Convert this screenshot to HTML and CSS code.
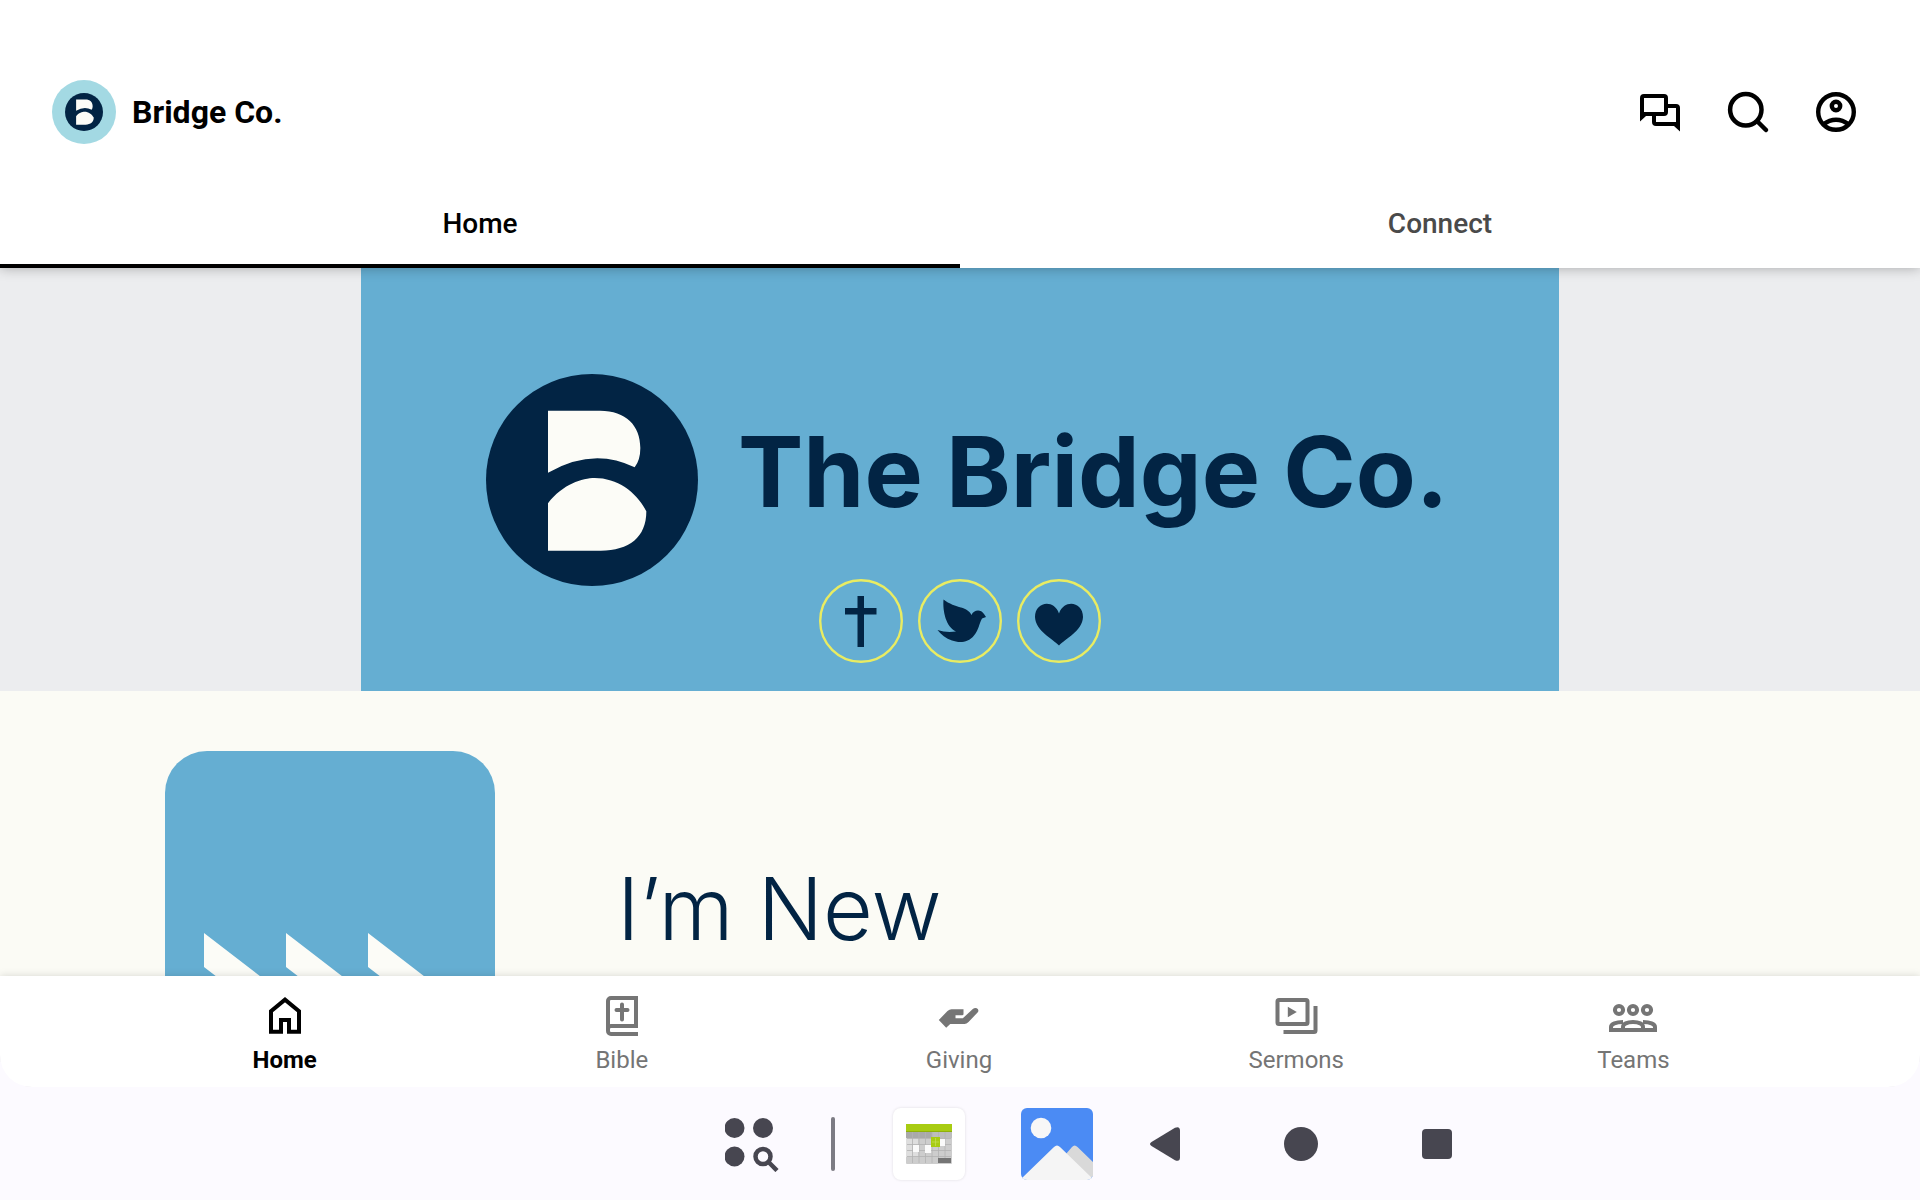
FILE: index.html
```html
<!DOCTYPE html>
<html lang="en">
<head>
    <meta charset="UTF-8">
    <meta name="viewport" content="width=device-width, initial-scale=1.0">
    <title>Bridge Co.</title>
    <link rel="stylesheet" href="styles.css">
</head>
<body>
    <div class="app">
        <header class="app-header">
            <div class="top-bar">
                <svg class="avatar" viewBox="0 0 64 64" aria-hidden="true">
                    <circle cx="32" cy="32" r="32" fill="#a3d9e3"/>
                    <svg x="13" y="13" width="38" height="38" viewBox="0 0 636 636">
                        <circle cx="318" cy="318" r="318" fill="#022444"/>
                        <path fill="#fcfcf7" d="M186 110H342C420 110 463 155 463 222Q463 258 446 280Q322 218 186 296ZM186 388C230 330 290 312 326 312C395 312 452 355 481 412C481 490 430 530 344 530H186Z"/>
                    </svg>
                </svg>
                <h1>Bridge Co.</h1>
                <div class="actions">
                    <button aria-label="Messages">
                        <svg viewBox="0 0 48 48" fill="none" stroke="currentColor" stroke-width="4">
                            <path d="M6 28V10a2 2 0 0 1 2-2h20a2 2 0 0 1 2 2v14a2 2 0 0 1-2 2H8"/>
                            <path d="M18 27v7a2 2 0 0 0 2 2h20M42 38V20a2 2 0 0 0-2-2h-9"/>
                            <path fill="currentColor" stroke="none" d="M4 25v8.5l6-5.5zM44 34v9.5L38 38z"/>
                        </svg>
                    </button>
                    <button aria-label="Search">
                        <svg viewBox="0 0 48 48" fill="none" stroke="currentColor" stroke-width="4.5" stroke-linecap="round">
                            <circle cx="21.8" cy="21.8" r="15.7"/>
                            <path d="M33.5 33.5l8.5 8.5"/>
                        </svg>
                    </button>
                    <button aria-label="Profile">
                        <svg viewBox="0 0 48 48" fill="none" stroke="currentColor" stroke-width="4.4">
                            <circle cx="24" cy="24" r="17.8"/>
                            <circle cx="24" cy="18" r="4.2"/>
                            <path d="M11 36.5q13-9.5 26 0"/>
                        </svg>
                    </button>
                </div>
            </div>
            <nav class="tabs">
                <a href="#home" class="tab active">Home</a>
                <a href="#connect" class="tab">Connect</a>
            </nav>
        </header>

        <main>
            <section class="hero">
                <div class="banner">
                    <div class="brand">
                        <svg class="logo" viewBox="0 0 636 636" aria-hidden="true">
                            <circle cx="318" cy="318" r="318" fill="#022444"/>
                            <path fill="#fcfcf7" d="M186 110H342C420 110 463 155 463 222Q463 258 446 280Q322 218 186 296ZM186 388C230 330 290 312 326 312C395 312 452 355 481 412C481 490 430 530 344 530H186Z"/>
                        </svg>
                        <h2>The Bridge Co.</h2>
                    </div>
                    <div class="badges">
                        <svg viewBox="0 0 84 84">
                            <circle cx="42" cy="42" r="40.8"/>
                            <path d="M38.5 17h6.5v12h12.5v6.5H45V68h-6.5V35.5H26V29h12.5z"/>
                        </svg>
                        <svg viewBox="0 0 84 84">
                            <circle cx="42" cy="42" r="40.8"/>
                            <path d="M25.5 20.5C31 25 38 27 43 28.5c5 1.5 9 4 10.5 7.5 2-5 9-6.5 12.5-1l2 3-4 1.5c-3 5-3 11-8 17C50 64 41 64 34 61.5c-6-2-11-6-14.5-10.5 6 2 12 2.5 18.5 1.5C28 48 24.5 32 25.5 20.5z"/>
                        </svg>
                        <svg viewBox="0 0 84 84">
                            <circle cx="42" cy="42" r="40.8"/>
                            <path d="M42 66.5C36 60 18.5 52 18 38c0-15 18.5-18.5 24-3.5 5.5-15 24-11.5 24 3.5C65.5 52 48 60 42 66.5z"/>
                        </svg>
                    </div>
                </div>
            </section>

            <section class="link-row">
                <a href="#new">
                    <!-- chevron tile -->
                    <svg class="tile" viewBox="0 0 330 316" aria-hidden="true">
                        <rect width="330" height="316" rx="42" fill="#65aed2"/>
                        <path fill="#fcfcf7" d="M39 182l100 77-100 77v-34l56-43-56-43zM121 182l100 77-100 77v-34l56-43-56-43zM203 182l100 77-100 77v-34l56-43-56-43z"/>
                    </svg>
                    <span>I’m New</span>
                </a>
            </section>
        </main>

        <nav class="bottom-nav">
            <a href="#home" class="current">
                <svg viewBox="0 0 48 48" fill="none" stroke="currentColor" stroke-width="4">
                    <path d="M10 39.7V19.3L24 7.6l14 11.7v20.4H28V28h-8v11.7z"/>
                </svg>
                Home
            </a>
            <a href="#bible">
                <svg viewBox="0 0 48 48" fill="none" stroke="currentColor" stroke-width="4">
                    <path d="M38 34V6H13a3 3 0 0 0-3 3v30a3 3 0 0 0 3 3h27M40 34H13a3 3 0 0 0-3 3"/>
                    <path stroke-linecap="round" d="M24 12.5v15M18.5 18h11"/>
                </svg>
                Bible
            </a>
            <a href="#giving">
                <svg viewBox="0 0 48 48" fill="currentColor">
                    <path d="M3.8 28l8.7-9q2-1.7 4-1.7h12V22q0 1.3-1.3 1.3h-6.7v3h7.3l10-9.3q2-1.6 4-.7 2.6 1.7 1 4L33.5 30q-2 2-4 2H15.2l-4 3.7z"/>
                </svg>
                Giving
            </a>
            <a href="#sermons">
                <svg viewBox="0 0 48 48" fill="none" stroke="currentColor" stroke-width="4">
                    <rect x="5.5" y="8" width="30" height="24" rx="1.5"/>
                    <path d="M11.5 40H42a1.5 1.5 0 0 0 1.5-1.5V14"/>
                    <path fill="currentColor" stroke="none" d="M15.8 14.7l9 5.3-9 5.3z"/>
                </svg>
                Sermons
            </a>
            <a href="#teams">
                <svg viewBox="0 0 48 48" fill="none" stroke="currentColor" stroke-width="4">
                    <circle cx="10" cy="18" r="4.1"/>
                    <circle cx="24" cy="18" r="4.1"/>
                    <circle cx="38" cy="18" r="4.1"/>
                    <path d="M14 38H2v-3c0-3 5-5 12-5M34 38h12v-3c0-3-5-5-12-5"/>
                    <path d="M14 38v-3c0-3 4-5 10-5s10 2 10 5v3z"/>
                </svg>
                Teams
            </a>
        </nav>
    </div>

    <footer class="system-bar">
        <div class="apps">
            <button aria-label="All apps">
                <svg width="56" height="56" viewBox="0 0 56 56" fill="#474650">
                    <circle cx="9.5" cy="12" r="10"/>
                    <circle cx="38" cy="12" r="10"/>
                    <circle cx="9.5" cy="40.5" r="10"/>
                    <circle cx="38" cy="40.5" r="7.5" fill="none" stroke="#474650" stroke-width="4.5"/>
                    <path d="M43 45.500l9 9" stroke="#474650" stroke-width="4.5"/>
                </svg>
            </button>
            <span class="divider"></span>
            <button aria-label="Calendar" class="calendar">
                <svg width="46" height="40" viewBox="0 0 46 40">
                    <rect width="46" height="40" rx="1" fill="#cdcdcd"/>
                    <rect y="8" width="26" height="6" fill="#a9a9a9"/>
                    <rect x="26" y="8" width="20" height="6" fill="#bdbdbd"/>
                    <path d="M0 14h12v19H0zM19 20h7v9h-7z" fill="#dedede"/>
                    <path d="M1 14.5h44M1 20.5h44M1 26.5h44M1 32.5h44M6.5 8v31M13 8v31M19.5 8v31M26 8v31M32.5 8v31M39 8v31" stroke="#b2b2b2" stroke-width=".8"/>
                    <path d="M32 34h13v5H32z" fill="#757575"/>
                    <path d="M7 21h6v7H7zM19 21h6v8h-6zM34 15h5v7h-5z" fill="#fafafa"/>
                    <path d="M25 13h9v10h-9zM0 0h46v8H0z" fill="#a8cc12"/>
                    <path d="M0 7h46v1H0z" fill="#8fb00b"/>
                    <path d="M29.5 14v8M26 18h7" stroke="#c6e05b" stroke-width=".7"/>
                </svg>
            </button>
            <button aria-label="Gallery">
                <svg width="72" height="72" viewBox="0 0 72 72">
                    <path d="M6 0h60a6 6 0 0 1 6 6v60a6 6 0 0 1-6 6H6a6 6 0 0 1-6-6V6a6 6 0 0 1 6-6z" fill="#4b8bf4"/>
                    <circle cx="20" cy="20" r="10.3" fill="#f7f7f7"/>
                    <path d="M45 46l6-7q2.5-3 5.5 0L72 54v14L68 71z" fill="#d9d9d9"/>
                    <path d="M1 70l32-31q3-3 6 0l32 31q-2 2-5 2H6q-3 0-5-2z" fill="#f5f5f5"/>
                </svg>
            </button>
        </div>
        <div class="controls">
            <button aria-label="Back">
                <svg width="30" height="34" viewBox="0 0 30 34" fill="#474650">
                    <path d="M1.5 15L25 .8q5-2 5 3v26.400q0 5-5 3L1.5 19q-3-2 0-4z"/>
                </svg>
            </button>
            <button aria-label="Home screen">
                <svg width="34" height="34" viewBox="0 0 34 34" fill="#474650"><circle cx="17" cy="17" r="17"/></svg>
            </button>
            <button aria-label="Recent apps">
                <svg width="30" height="30" viewBox="0 0 30 30" fill="#474650"><rect width="30" height="30" rx="4"/></svg>
            </button>
        </div>
    </footer>
</body>
</html>
```
FILE: styles.css
```css
* {
    box-sizing: border-box;
}
body {
    margin: 0;
    height: 100vh;
    display: flex;
    flex-direction: column;
    overflow: hidden;
    background-color: #fcfaff;
    color: #000;
    font-family: Roboto, sans-serif;
}
h1, h2 {
    margin: 0;
}
a {
    color: inherit;
    text-decoration: none;
}
button {
    padding: 0;
    border: none;
    background: none;
    color: inherit;
    cursor: pointer;
}
svg {
    display: block;
}
.app {
    flex: 1;
    min-height: 0;
    display: flex;
    flex-direction: column;
    overflow: hidden;
    border-radius: 0 0 32px 32px;
}

/* header */
.app-header {
    position: relative;
    padding-top: 48px;
    background-color: #fff;
    box-shadow: 0 0 12px rgba(0, 0, 0, 0.3);
}
.top-bar {
    display: flex;
    align-items: center;
    height: 128px;
    padding: 0 60px 0 52px;
}
.avatar {
    width: 64px;
    height: 64px;
    margin-right: 16px;
}
h1 {
    font-size: 32px;
    font-weight: 700;
}
.actions {
    display: flex;
    gap: 40px;
    margin-left: auto;
}
.actions svg, .bottom-nav svg {
    width: 48px;
    height: 48px;
}
.tabs {
    display: flex;
}
.tab {
    flex: 1;
    height: 92px;
    line-height: 95px;
    text-align: center;
    font-size: 28px;
    font-weight: 500;
    color: #4a4a4a;
}
.tab.active {
    color: #000;
    box-shadow: inset 0 -4px #000;
}

/* content */
main {
    flex: 1;
    min-height: 0;
    overflow: hidden;
    background-color: #fbfbf5;
}
.hero {
    background-color: #ecedef;
}
.banner {
    width: 62.4%;
    margin: 0 auto;
    padding: 106px 0 28px;
    background-color: #65aed2;
    color: #022444;
    font-family: Inter, sans-serif;
}
.brand {
    display: flex;
    align-items: center;
    gap: 40px;
    padding-left: 125px;
}
.logo {
    flex: none;
    width: 212px;
    height: 212px;
}
h2 {
    padding-bottom: 16px;
    font-size: 98px;
    font-weight: 700;
    line-height: 120px;
    white-space: nowrap;
}
.badges {
    display: flex;
    justify-content: center;
    gap: 15px;
    margin-top: -7px;
}
.badges svg {
    width: 84px;
    height: 84px;
    fill: #022444;
}
.badges circle {
    fill: none;
    stroke: #e9ec62;
    stroke-width: 2.4;
}
.link-row a {
    display: flex;
    align-items: center;
    gap: 122px;
    padding: 60px 165px;
    color: #022444;
    font-family: Inter, sans-serif;
    font-size: 86px;
    font-weight: 300;
}
.tile {
    flex: none;
    width: 330px;
    height: 316px;
}

/* bottom navigation */
.bottom-nav {
    position: relative;
    display: flex;
    padding: 16px 118px 13px 116px;
    background-color: #fff;
    box-shadow: 0 0 8px rgba(0, 0, 0, 0.15);
}
.bottom-nav a {
    flex: 1;
    display: flex;
    flex-direction: column;
    align-items: center;
    gap: 6px;
    color: #757575;
    font-size: 24px;
    line-height: 28px;
}
.bottom-nav .current {
    color: #000;
    font-weight: 700;
}

/* system bar */
.system-bar {
    display: flex;
    justify-content: center;
    gap: 4px;
    height: 113px;
    padding-left: 310px;
}
.apps, .controls {
    display: flex;
    align-items: center;
}
.divider {
    width: 4px;
    height: 54px;
    margin: 0 58px 0 50px;
    border-radius: 2px;
    background-color: #7c7b84;
}
.calendar {
    display: flex;
    align-items: center;
    justify-content: center;
    width: 72px;
    height: 72px;
    margin-right: 56px;
    border-radius: 8px;
    background-color: #fff;
    box-shadow: 0 0 3px rgba(0, 0, 0, 0.12);
}
.controls button {
    display: flex;
    justify-content: center;
    width: 136px;
}
```
